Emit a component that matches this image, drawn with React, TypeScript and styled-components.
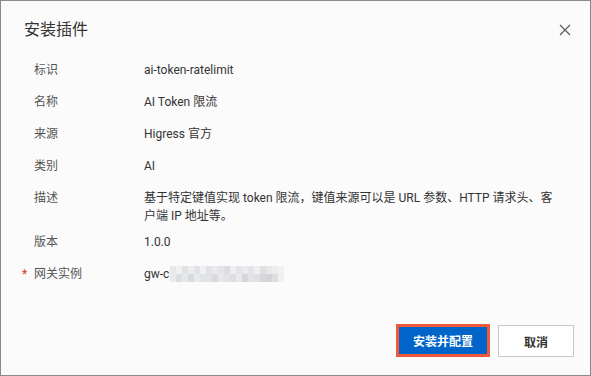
import React from 'react';
import styled, { createGlobalStyle } from 'styled-components';

const GlobalStyle = createGlobalStyle`
  html, body {
    margin: 0;
    padding: 0;
    background: #fbfbfb;
  }
  body {
    font-family: "Segoe UI", Roboto, "Noto Sans CJK SC", sans-serif;
  }
`;

const Dialog = styled.div`
  box-sizing: border-box;
  width: 591px;
  height: 376px;
  border: 1px solid #8a8a8a;
  background: #fbfbfb;
  display: flex;
  flex-direction: column;
`;

const Header = styled.div`
  display: flex;
  align-items: center;
  justify-content: space-between;
  padding: 20px 17px 0 23px;
  height: 18px;
`;

const Title = styled.div`
  font-size: 16px;
  line-height: 18px;
  color: #333;
`;

const CloseButton = styled.button`
  border: 0;
  background: transparent;
  padding: 0;
  width: 16px;
  height: 16px;
  display: flex;
  align-items: center;
  justify-content: center;
  cursor: pointer;
`;

const Fields = styled.div`
  display: flex;
  flex-direction: column;
  gap: 14px;
  margin-top: 22px;
  padding-left: 21px;
`;

interface RowProps {
  multiline?: boolean;
}

const Row = styled.div`
  display: flex;
  align-items: flex-start;
  font-size: 12px;
  line-height: 18px;
  margin-bottom: ${({ multiline }: RowProps) => (multiline ? -6 : 0)}px;
`;

interface MarkProps {
  shown: boolean;
}

const Required = styled.span`
  width: 12px;
  color: ${({ shown }: MarkProps) => (shown ? '#d93026' : 'transparent')};
`;

const Label = styled.div`
  width: 110px;
  color: #555;
`;

const Value = styled.div`
  color: #333;
  max-width: 412px;
  display: flex;
  align-items: center;
`;

const Mosaic = styled.div`
  display: grid;
  grid-template-columns: repeat(19, 6px);
  grid-template-rows: repeat(2, 8px);
  margin-left: 1px;
`;

const Tile = styled.div`
  background: ${({ tone }: { tone: string }) => tone};
`;

const Footer = styled.div`
  margin-top: auto;
  display: flex;
  justify-content: flex-end;
  gap: 8px;
  padding: 0 16px 18px;
`;

const PrimaryButton = styled.button`
  box-sizing: border-box;
  width: 94px;
  height: 33px;
  border: 3px solid #ee5a3b;
  background: #0064c8;
  color: #fff;
  font: bold 12px "Segoe UI", Roboto, "Noto Sans CJK SC", sans-serif;
  cursor: pointer;
`;

const SecondaryButton = styled.button`
  box-sizing: border-box;
  width: 76px;
  height: 32px;
  margin-top: 1px;
  border: 1px solid #c5c9ce;
  background: #fff;
  color: #333;
  font: bold 12px "Segoe UI", Roboto, "Noto Sans CJK SC", sans-serif;
  cursor: pointer;
`;

const tones = [
  '#e6e8ec', '#f0f0f0', '#dfe3e8', '#ececec', '#e2e2e6', '#eef0f2', '#e0e4ea', '#eaeaea',
  '#e5e5e8', '#dcdde2', '#eeeeee', '#e1e4e9', '#ebebeb', '#e4e5ea', '#efefef', '#dedfe3',
  '#e8e8ea', '#ececee', '#f2f2f2',
  '#ebebee', '#dadde2', '#e6e7ea', '#d8dae0', '#eaeaec', '#dde3ea', '#e3e3e6', '#d9dbe0',
  '#e7e7ea', '#e2e3e7', '#dcdde0', '#e9e9eb', '#d5d6db', '#e4e4e8', '#dedfe2', '#d6d7dc',
  '#d2d3d7', '#dfdfe2', '#f0f0f0',
];

const rows = [
  { label: '标识', value: 'ai-token-ratelimit' },
  { label: '名称', value: 'AI Token 限流' },
  { label: '来源', value: 'Higress 官方' },
  { label: '类别', value: 'AI' },
  {
    label: '描述',
    value:
      '基于特定键值实现 token 限流，键值来源可以是 URL 参数、HTTP 请求头、客户端 IP 地址等。',
    multiline: true,
  },
  { label: '版本', value: '1.0.0' },
];

const App: React.FC = () => (
  <>
    <GlobalStyle />
    <Dialog>
      <Header>
        <Title>安装插件</Title>
        <CloseButton aria-label="close">
          <svg width="12" height="12" viewBox="0 0 12 12">
            <path d="M1 1L11 11M11 1L1 11" stroke="#555" strokeWidth="1.1" />
          </svg>
        </CloseButton>
      </Header>
      <Fields>
        {rows.map((row) => (
          <Row key={row.label} multiline={row.multiline}>
            <Required shown={false}>*</Required>
            <Label>{row.label}</Label>
            <Value>{row.value}</Value>
          </Row>
        ))}
        <Row>
          <Required shown>*</Required>
          <Label>网关实例</Label>
          <Value>
            gw-c
            <Mosaic>
              {tones.map((tone, i) => (
                <Tile key={i} tone={tone} />
              ))}
            </Mosaic>
          </Value>
        </Row>
      </Fields>
      <Footer>
        <PrimaryButton type="button">安装并配置</PrimaryButton>
        <SecondaryButton type="button">取消</SecondaryButton>
      </Footer>
    </Dialog>
  </>
);

export default App;
